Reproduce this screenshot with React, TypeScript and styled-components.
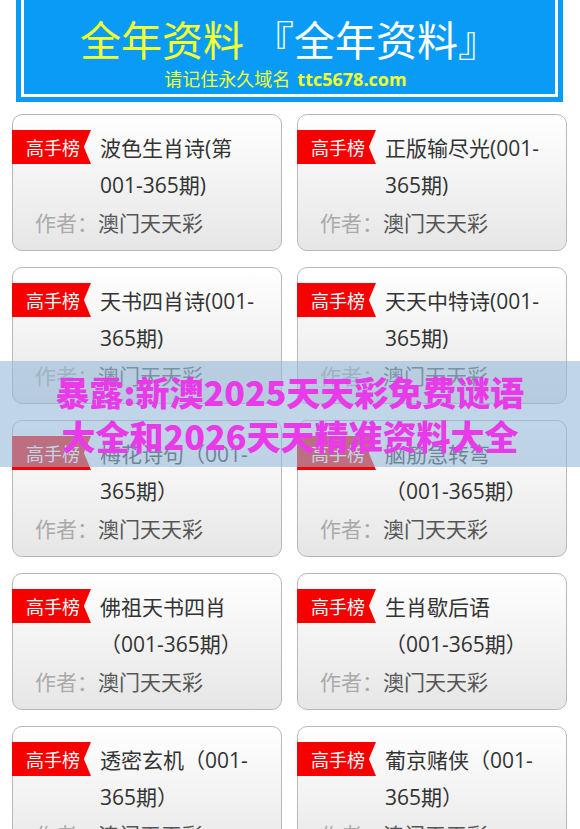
import React from 'react';
import styled, { createGlobalStyle } from 'styled-components';

const GlobalStyle = createGlobalStyle`
  body {
    margin: 0;
    background: #fff;
    font-family: 'Open Sans', 'Noto Sans CJK SC', sans-serif;
  }
`;

const Page = styled.div`
  position: relative;
  width: 580px;
  overflow: hidden;
`;

const Header = styled.header`
  margin: -10px 17px 0 16px;
  padding: 5px;
  background: #0a9bf7;
`;

const HeaderInner = styled.div`
  border: 3px solid #fff;
  padding: 16px 0 1px;
  text-align: center;
  font-family: 'Noto Sans CJK SC', sans-serif;
`;

const BigTitle = styled.div`
  font-size: 41px;
  line-height: 48px;
  color: #fff;
  margin-bottom: 2px;

  .yellow {
    color: #f4ff2e;
  }
`;

const Domain = styled.div`
  font-size: 18px;
  line-height: 28px;
  color: #f4ff2e;
  padding-right: 8px;

  b {
    font-family: 'Open Sans', sans-serif;
    font-weight: 700;
    margin-left: 7px;
  }
`;

const Grid = styled.section`
  display: grid;
  grid-template-columns: 1fr 1fr;
  column-gap: 15px;
  row-gap: 16px;
  padding: 12px 13px 0 12px;
`;

const Card = styled.div`
  border: 1px solid #b8b8b8;
  border-radius: 10px;
  background: linear-gradient(#fff, #e6e6e6);
  padding: 15px 0 9px;
`;

const CardTop = styled.div`
  display: flex;
  align-items: flex-start;
`;

const Badge = styled.span`
  flex: none;
  width: 79px;
  height: 34px;
  margin-left: -1px;
  padding-left: 14px;
  box-sizing: border-box;
  background: #f70000;
  color: #fff;
  font-family: 'Noto Sans CJK SC', sans-serif;
  font-size: 18px;
  line-height: 34px;
  clip-path: polygon(0 0, 100% 0, 91% 50%, 100% 100%, 0 100%);
`;

const Title = styled.div`
  flex: 1;
  margin-left: 9px;
  padding-right: 18px;
  font-size: 21px;
  line-height: 37px;
  color: #333;
`;

const Author = styled.div`
  padding-left: 22px;
  font-family: 'Noto Sans CJK SC', sans-serif;
  font-size: 21px;
  line-height: 37px;
  color: #555;

  .label {
    color: #aaa;
  }
`;

const Overlay = styled.div`
  position: absolute;
  top: 361px;
  left: 0;
  right: 0;
  padding: 9px 0;
  background: rgba(150, 185, 215, 0.6);
  text-align: center;
  font-family: 'Noto Sans CJK SC', sans-serif;
  font-weight: 900;
  font-size: 34px;
  line-height: 44px;
  color: #e83ae8;
`;

const items = [
  '波色生肖诗(第001-365期)',
  '正版输尽光(001-365期)',
  '天书四肖诗(001-365期)',
  '天天中特诗(001-365期)',
  '梅花诗句（001-365期）',
  '脑筋急转弯（001-365期）',
  '佛祖天书四肖（001-365期）',
  '生肖歇后语（001-365期）',
  '透密玄机（001-365期）',
  '葡京赌侠（001-365期）',
];

const App = () => {
  return (
    <Page>
      <GlobalStyle />
      <Header>
        <HeaderInner>
          <BigTitle>
            <span className="yellow">全年资料</span> 『全年资料』
          </BigTitle>
          <Domain>
            请记住永久域名<b>ttc5678.com</b>
          </Domain>
        </HeaderInner>
      </Header>
      <Grid>
        {items.map((title) => (
          <Card key={title}>
            <CardTop>
              <Badge>高手榜</Badge>
              <Title>{title.replace('-', '-\u200B')}</Title>
            </CardTop>
            <Author>
              <span className="label">作者：</span>澳门天天彩
            </Author>
          </Card>
        ))}
      </Grid>
      <Overlay>
        暴露:新澳2025天天彩免费谜语
        <br />
        大全和2026天天精准资料大全
      </Overlay>
    </Page>
  );
};

export default App;
